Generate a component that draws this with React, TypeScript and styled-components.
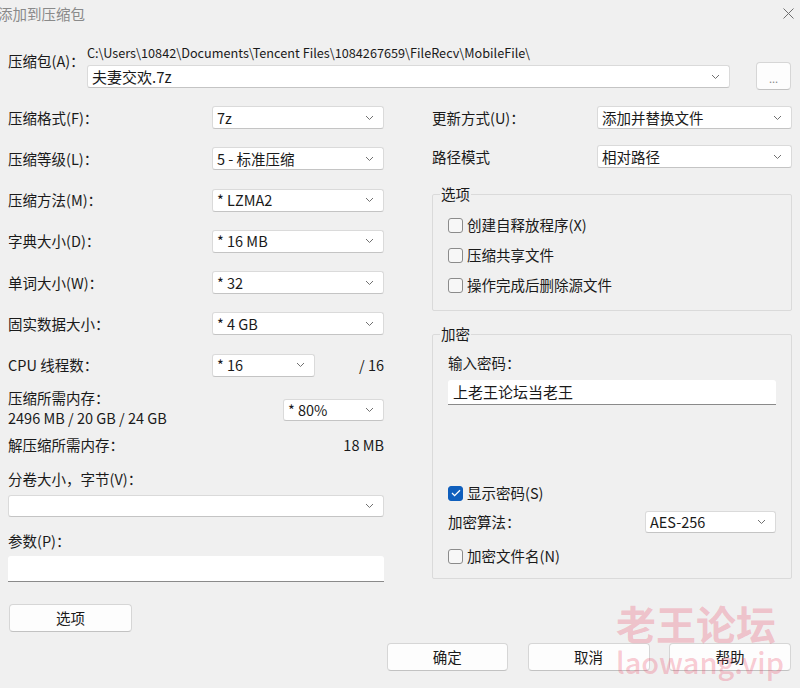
import React from "react";
import styled, { createGlobalStyle } from "styled-components";

const GlobalStyle = createGlobalStyle`
  html, body {
    margin: 0;
    padding: 0;
    background: #f0f0f0;
  }
`;

const Window = styled.div`
  position: relative;
  width: 800px;
  height: 688px;
  overflow: hidden;
  background: #f0f0f0;
  color: #1a1a1a;
  font-family: "Noto Sans CJK SC", "Noto Sans", sans-serif;
  font-size: 14.5px;
  line-height: 20px;
`;

const TitleBar = styled.div`
  height: 44px;
  display: flex;
  justify-content: space-between;
  align-items: flex-start;
`;

const Title = styled.div`
  margin: 4px 0 0 -2px;
  color: #8a8a8a;
`;

const CloseIcon = styled.svg`
  margin: 8px 6px 0 0;
`;

const ArchiveSection = styled.div`
  height: 46px;
  display: flex;
  align-items: flex-start;
  padding-left: 8px;
`;

const ArchiveLabel = styled.div`
  width: 79px;
  margin-top: 7px;
`;

const ArchiveFields = styled.div`
  width: 643px;
  display: flex;
  flex-direction: column;
`;

const PathText = styled.div`
  height: 18px;
  margin-bottom: 3px;
  line-height: 18px;
  font-size: 12.7px;
  white-space: nowrap;
`;

const Body = styled.div`
  display: grid;
  grid-template-columns: 376px 360px;
  column-gap: 48px;
  padding: 16px 0 0 8px;
`;

const Column = styled.div`
  display: flex;
  flex-direction: column;
`;

const FieldList = styled.div`
  display: flex;
  flex-direction: column;
  gap: 18.3px;
`;

const FieldRow = styled.div<{ $gap?: number }>`
  display: flex;
  align-items: center;
  height: 23px;
  margin-top: ${(p) => p.$gap ?? 0}px;
`;

const FieldLabel = styled.div<{ $width: number }>`
  width: ${(p) => p.$width}px;
  flex-shrink: 0;
  white-space: nowrap;
`;

const ComboBox = styled.div<{ $width?: number; $height?: number }>`
  box-sizing: border-box;
  width: ${(p) => (p.$width ? `${p.$width}px` : "100%")};
  height: ${(p) => p.$height ?? 23}px;
  display: flex;
  align-items: center;
  padding: 0 9px 0 4px;
  background: #ffffff;
  border: 1px solid #dadada;
  border-bottom-color: #c4c4c4;
  border-radius: 3px;
  flex-shrink: 0;
`;

const ComboText = styled.span<{ $size?: number }>`
  flex: 1;
  white-space: nowrap;
  font-size: ${(p) => p.$size ?? 14.5}px;
`;

const Chevron = () => (
  <svg width="9" height="6" viewBox="0 0 9 6">
    <path d="M1 1l3.5 3.5L8 1" fill="none" stroke="#707070" strokeWidth="1" />
  </svg>
);

const Combo = ({
  value,
  width,
  height,
  size,
}: {
  value?: string;
  width?: number;
  height?: number;
  size?: number;
}) => (
  <ComboBox $width={width} $height={height}>
    <ComboText $size={size}>{value}</ComboText>
    <Chevron />
  </ComboBox>
);

const MemoryRow = styled.div`
  display: flex;
  justify-content: space-between;
  align-items: flex-start;
  margin-top: 11px;
`;

const MemoryText = styled.div`
  display: flex;
  flex-direction: column;
`;

const ComboSlot = styled.div<{ $top: number }>`
  margin-top: ${(p) => p.$top}px;
`;

const InfoRow = styled.div<{ $gap: number }>`
  display: flex;
  justify-content: space-between;
  margin-top: ${(p) => p.$gap}px;
`;

const Spacer = styled.div<{ $h: number }>`
  height: ${(p) => p.$h}px;
  flex-shrink: 0;
`;

const Value = styled.span`
  margin-left: auto;
`;

const TextField = styled.div<{ $width?: number; $height: number }>`
  box-sizing: border-box;
  width: ${(p) => (p.$width ? `${p.$width}px` : "100%")};
  height: ${(p) => p.$height}px;
  display: flex;
  align-items: center;
  padding-left: 5px;
  background: #ffffff;
  border-bottom: 1px solid #8a8a8a;
  border-radius: 3px 3px 0 0;
`;

const Button = styled.div<{ $width: number }>`
  box-sizing: border-box;
  width: ${(p) => p.$width}px;
  height: 28px;
  display: flex;
  align-items: center;
  justify-content: center;
  background: #fdfdfd;
  border: 1px solid #d6d6d6;
  border-bottom-color: #c2c2c2;
  border-radius: 4px;
  flex-shrink: 0;
`;

const BrowseButton = styled(Button)`
  margin: 18px 0 0 26px;
  align-items: flex-end;
  padding-bottom: 5px;
  color: #8a8a8a;
  font-size: 11px;
  line-height: 12px;
`;

const OptionsButton = styled(Button)`
  margin: 22px 0 0 1px;
`;

const Group = styled.fieldset<{ $gap: number }>`
  margin: ${(p) => p.$gap}px 0 0 0;
  padding: 0;
  min-width: 0;
  border: 1px solid #dadada;
  border-radius: 2px;
`;

const Legend = styled.legend`
  margin-left: 7px;
  padding: 0 1px;
  line-height: 20px;
`;

const GroupBody = styled.div<{ $pad: string }>`
  display: flex;
  flex-direction: column;
  padding: ${(p) => p.$pad};
`;

const CheckRow = styled.div<{ $height: number; $gap?: number }>`
  display: flex;
  align-items: center;
  height: ${(p) => p.$height}px;
  margin-top: ${(p) => p.$gap ?? 0}px;
`;

const CheckBox = styled.span<{ $checked?: boolean }>`
  box-sizing: border-box;
  width: 15px;
  height: 15px;
  margin-right: 4px;
  display: inline-flex;
  align-items: center;
  justify-content: center;
  border-radius: 3px;
  border: 1px solid ${(p) => (p.$checked ? "#0f5fbd" : "#8b8b8b")};
  background: ${(p) => (p.$checked ? "#0f5fbd" : "#f7f7f7")};
`;

const Check = ({ checked, label }: { checked?: boolean; label: string }) => (
  <>
    <CheckBox $checked={checked}>
      {checked && (
        <svg width="10" height="8" viewBox="0 0 10 8">
          <path d="M1 4l2.6 2.6L9 1.2" fill="none" stroke="#fff" strokeWidth="1.3" />
        </svg>
      )}
    </CheckBox>
    <span>{label}</span>
  </>
);

const Footer = styled.div`
  display: flex;
  justify-content: flex-end;
  gap: 19.5px;
  margin-top: 11px;
  padding-right: 9px;
`;

const Watermark = styled.div`
  position: absolute;
  left: 616px;
  top: 601px;
  display: flex;
  flex-direction: column;
  color: rgba(236, 80, 110, 0.3);
  pointer-events: none;
`;

const WatermarkTitle = styled.div`
  font-family: "Noto Sans CJK SC", sans-serif;
  font-weight: 700;
  font-size: 40px;
  line-height: 44px;
`;

const WatermarkUrl = styled.div`
  margin-top: -2px;
  font-family: "Noto Sans CJK SC", sans-serif;
  font-weight: 500;
  font-size: 29px;
  line-height: 36px;
`;

const leftFields: [string, string][] = [
  ["压缩格式(F)：", "7z"],
  ["压缩等级(L)：", "5 - 标准压缩"],
  ["压缩方法(M)：", "*  LZMA2"],
  ["字典大小(D)：", "*  16 MB"],
  ["单词大小(W)：", "*  32"],
  ["固实数据大小：", "*  4 GB"],
];

export default function App() {
  return (
    <Window>
      <GlobalStyle />
      <TitleBar>
        <Title>添加到压缩包</Title>
        <CloseIcon width="11" height="11" viewBox="0 0 11 11">
          <path d="M0.5 0.5l10 10M10.5 0.5l-10 10" stroke="#6e6e6e" strokeWidth="1" />
        </CloseIcon>
      </TitleBar>

      <ArchiveSection>
        <ArchiveLabel>压缩包(A)：</ArchiveLabel>
        <ArchiveFields>
          <PathText>C:\Users\10842\Documents\Tencent Files\1084267659\FileRecv\MobileFile\</PathText>
          <Combo value="夫妻交欢.7z" size={15} />
        </ArchiveFields>
        <BrowseButton $width={35}>...</BrowseButton>
      </ArchiveSection>

      <Body>
        <Column>
          <FieldList>
            {leftFields.map(([label, value]) => (
              <FieldRow key={label}>
                <FieldLabel $width={204}>{label}</FieldLabel>
                <Combo value={value} width={172} />
              </FieldRow>
            ))}
            <FieldRow>
              <FieldLabel $width={204}>CPU 线程数：</FieldLabel>
              <Combo value="*  16" width={103} />
              <Value>/ 16</Value>
            </FieldRow>
          </FieldList>

          <MemoryRow>
            <MemoryText>
              <span>压缩所需内存：</span>
              <span>2496 MB / 20 GB / 24 GB</span>
            </MemoryText>
            <ComboSlot $top={11}>
              <Combo value="*  80%" width={101} height={22} />
            </ComboSlot>
          </MemoryRow>

          <InfoRow $gap={7}>
            <span>解压缩所需内存：</span>
            <span>18 MB</span>
          </InfoRow>

          <InfoRow $gap={14}>
            <span>分卷大小，字节(V)：</span>
          </InfoRow>
          <Spacer $h={6} />
          <Combo height={22} />

          <InfoRow $gap={14}>
            <span>参数(P)：</span>
          </InfoRow>
          <Spacer $h={5} />
          <TextField $height={26} />

          <OptionsButton $width={123}>选项</OptionsButton>
        </Column>

        <Column>
          <FieldRow>
            <FieldLabel $width={165}>更新方式(U)：</FieldLabel>
            <Combo value="添加并替换文件" width={195} />
          </FieldRow>
          <FieldRow $gap={16}>
            <FieldLabel $width={165}>路径模式</FieldLabel>
            <Combo value="相对路径" width={195} />
          </FieldRow>

          <Group $gap={16}>
            <Legend>选项</Legend>
            <GroupBody $pad="6px 15px 10px">
              <CheckRow $height={30}>
                <Check label="创建自释放程序(X)" />
              </CheckRow>
              <CheckRow $height={30}>
                <Check label="压缩共享文件" />
              </CheckRow>
              <CheckRow $height={30}>
                <Check label="操作完成后删除源文件" />
              </CheckRow>
            </GroupBody>
          </Group>

          <Group $gap={13}>
            <Legend>加密</Legend>
            <GroupBody $pad="9px 15px 11px">
              <span>输入密码：</span>
              <Spacer $h={7} />
              <TextField $width={328} $height={25}>
                <ComboText $size={15}>上老王论坛当老王</ComboText>
              </TextField>
              <CheckRow $height={22} $gap={77}>
                <Check checked label="显示密码(S)" />
              </CheckRow>
              <CheckRow $height={22} $gap={7}>
                <FieldLabel $width={197}>加密算法：</FieldLabel>
                <Combo value="AES-256" width={131} height={22} />
              </CheckRow>
              <CheckRow $height={22} $gap={12}>
                <Check label="加密文件名(N)" />
              </CheckRow>
            </GroupBody>
          </Group>
        </Column>
      </Body>

      <Footer>
        <Button $width={121.5}>确定</Button>
        <Button $width={122}>取消</Button>
        <Button $width={122}>帮助</Button>
      </Footer>

      <Watermark>
        <WatermarkTitle>老王论坛</WatermarkTitle>
        <WatermarkUrl>laowang.vip</WatermarkUrl>
      </Watermark>
    </Window>
  );
}
